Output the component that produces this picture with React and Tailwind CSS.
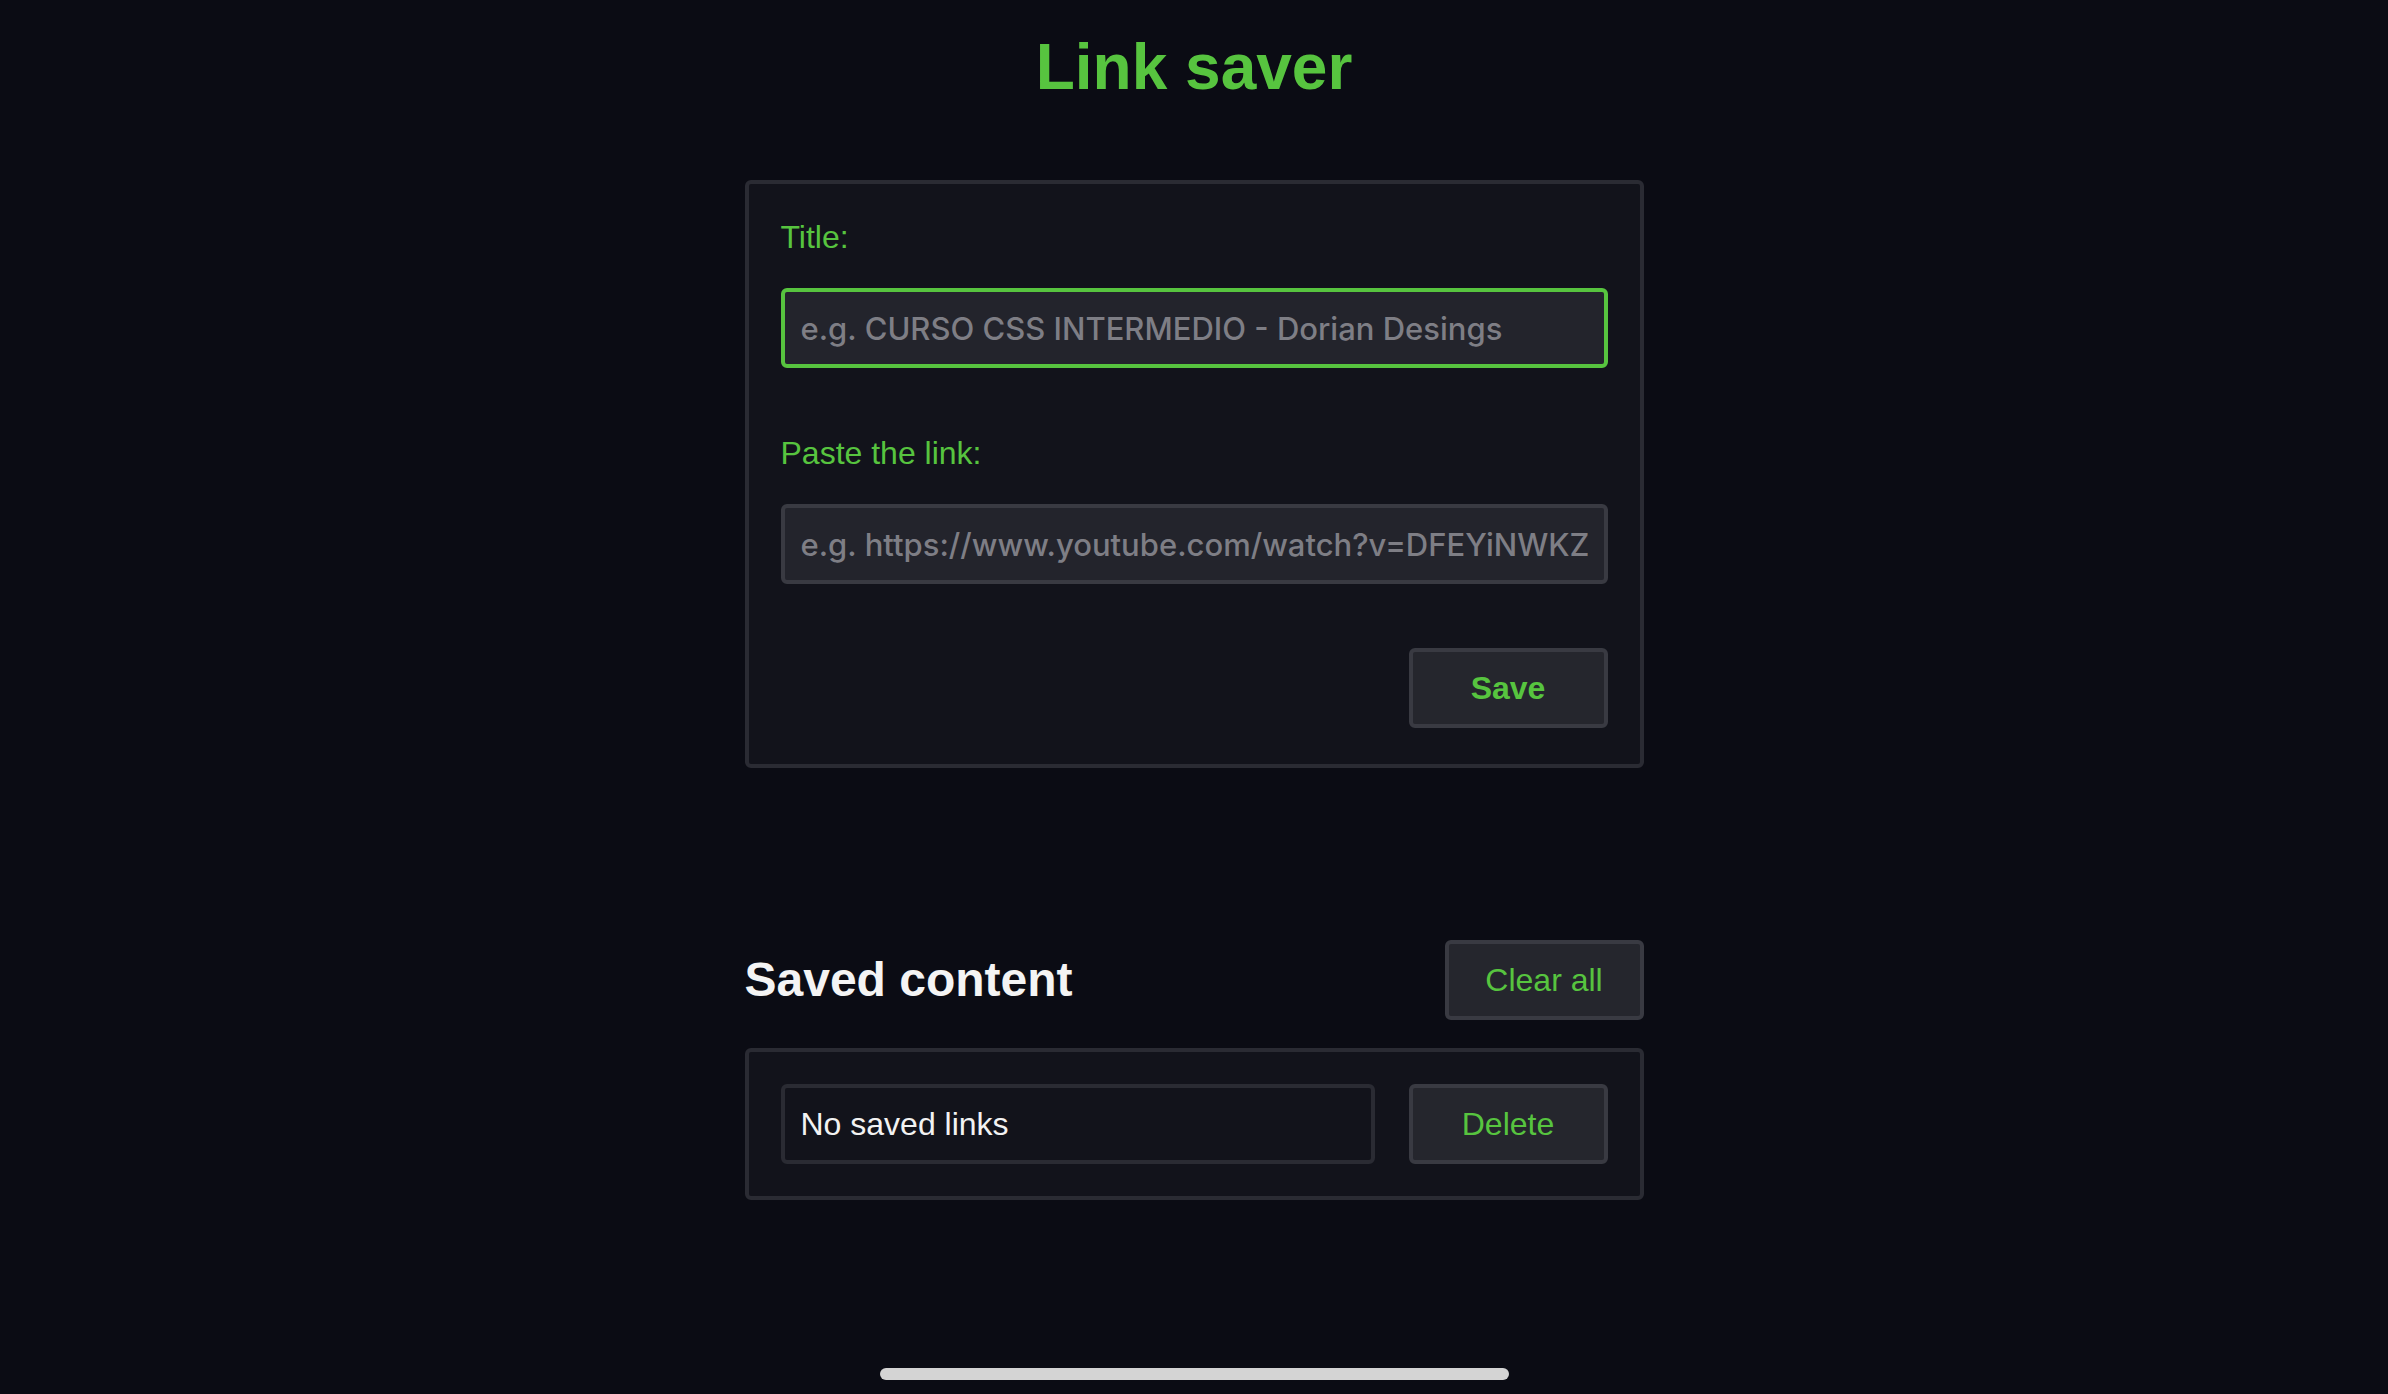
import React from "react";

const SANS = "font-['Liberation_Sans','Helvetica',Arial,sans-serif]";

const Field = ({ label, placeholder, focused, className = "" }) => {
  return (
    <div className={`flex flex-col ${className}`}>
      <label className="text-[32px] leading-[36px] text-[#57c43f] mb-[33px]">{label}</label>
      <input
        type="text"
        placeholder={placeholder}
        className={`h-[80px] w-full rounded-[6px] border-4 bg-[#23242c] px-[16px] text-[31px] font-medium font-['Inter',sans-serif] text-white placeholder:text-[#7e7e85] outline-none ${
          focused ? "border-[#57c43f]" : "border-[#393a42]"
        }`}
      />
    </div>
  );
};

export default function App() {
  return (
    <div className={`h-[1394px] w-full bg-[#0b0c14] flex flex-col items-center ${SANS}`}>
      <h1 className="mt-[35px] text-[64px] leading-[64px] font-bold text-[#57c43f]">Link saver</h1>

      {/* Form card */}
      <form
        className="mt-[81px] w-[899px] rounded-[6px] border-4 border-[#2a2b33] bg-[#12131b] px-[32px] pt-[35px] pb-[36px] flex flex-col"
        onSubmit={(e) => e.preventDefault()}
      >
        <Field label="Title:" placeholder="e.g. CURSO CSS INTERMEDIO - Dorian Desings" focused />
        <Field
          label="Paste the link:"
          placeholder="e.g. https://www.youtube.com/watch?v=DFEYiNWKZ0Q"
          className="mt-[67px]"
        />
        <button
          type="submit"
          className="mt-[64px] self-end h-[80px] w-[199px] rounded-[6px] border-4 border-[#393a42] bg-[#25262d] text-[32px] font-bold text-[#57c43f]"
        >
          Save
        </button>
      </form>

      {/* Saved content */}
      <div className="mt-[172px] w-[899px] flex items-center justify-between">
        <h2 className="text-[48px] leading-[56px] font-bold text-[#f4f4f4]">Saved content</h2>
        <button className="h-[80px] w-[199px] rounded-[6px] border-4 border-[#393a42] bg-[#25262d] text-[32px] text-[#57c43f]">
          Clear all
        </button>
      </div>

      <div className="mt-[28px] w-[899px] rounded-[6px] border-4 border-[#2a2b33] bg-[#12131b] p-[32px] flex gap-[34px]">
        <div className="flex-1 h-[80px] rounded-[6px] border-4 border-[#2a2b33] bg-[#12131b] px-[16px] flex items-center text-[32px] text-[#f2f2f2]">
          No saved links
        </div>
        <button className="h-[80px] w-[199px] rounded-[6px] border-4 border-[#393a42] bg-[#25262d] text-[32px] text-[#57c43f]">
          Delete
        </button>
      </div>

      {/* home indicator */}
      <div className="mt-auto mb-[14px] h-[12px] w-[629px] rounded-full bg-[#d4d4d4]" />
    </div>
  );
}
